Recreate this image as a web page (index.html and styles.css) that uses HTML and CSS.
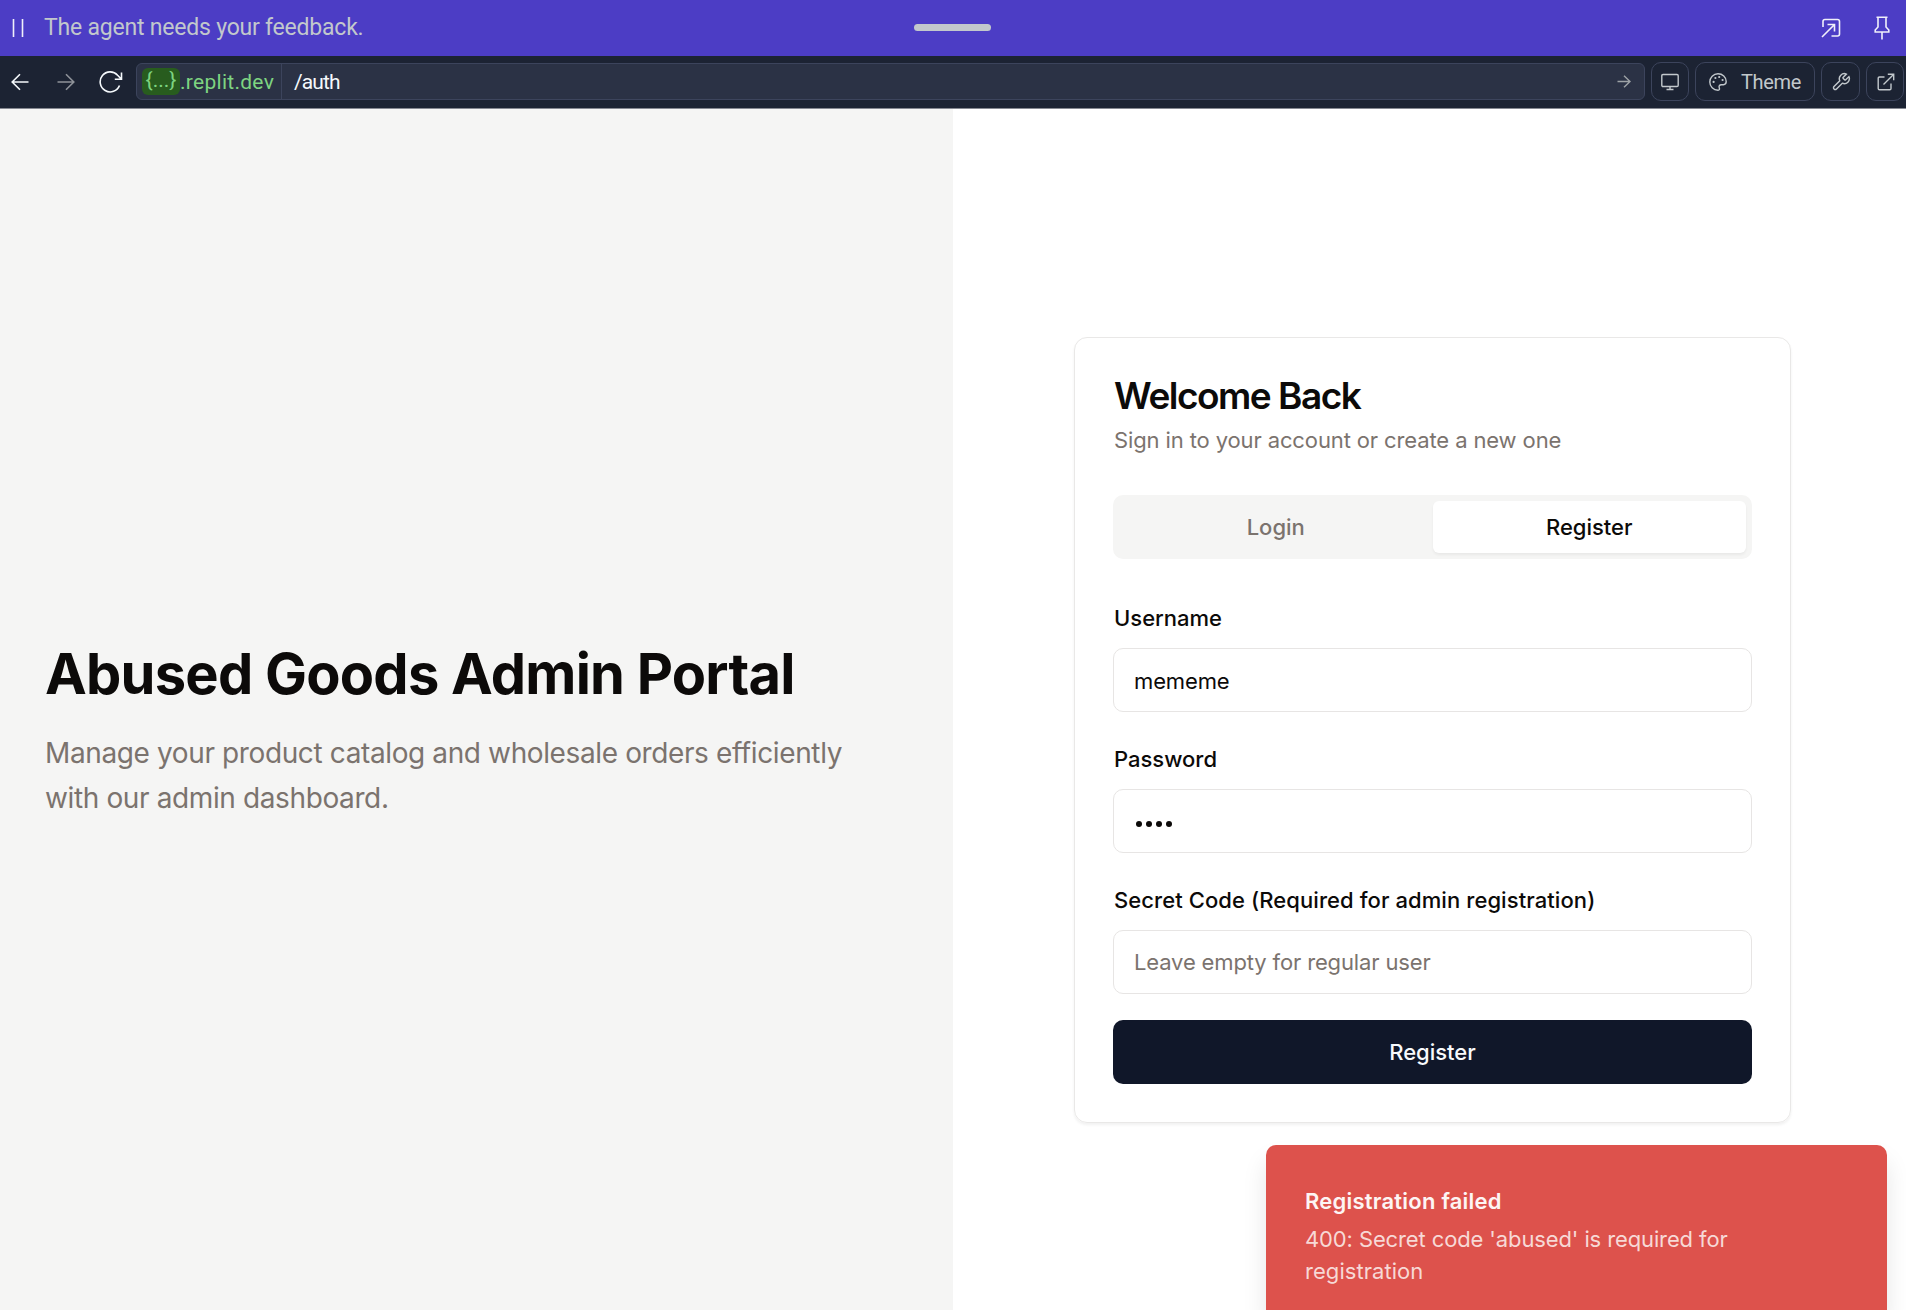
FILE: index.html
```html
<!DOCTYPE html>
<html lang="en">
<head>
<meta charset="utf-8">
<title>Abused Goods Admin Portal</title>
<link rel="stylesheet" href="styles.css">
</head>
<body>
<header class="agent-bar">
  <svg class="icon pause" width="12" height="20" viewBox="0 0 12 20"><path d="M1.500 1v18M10.500 1v18"/></svg>
  <span class="agent-text">The agent needs your feedback.</span>
  <span class="handle"></span>
  <svg class="icon popout" width="20" height="20" viewBox="0 0 20 20"><path d="M2 9V3.500Q2 1.500 4 1.500H16.500Q18.500 1.500 18.500 3.500V16Q18.500 18 16.500 18H10.500M1 19 13.500 6.500M6.500 6.500H13.500V13.500"/></svg>
  <svg class="icon pin" width="16" height="24" viewBox="0 0 16 24"><path d="M2.500 1.200H13.500M4 1.200V11L1.200 14V16H14.800V14L12 11V1.200M8 16V23.500"/></svg>
</header>
<nav class="toolbar">
  <svg class="icon back" width="18" height="18" viewBox="0 0 18 18"><path d="M17.500 9H1.500M9 1.200 1.200 9 9 16.800"/></svg>
  <svg class="icon forward" width="18" height="18" viewBox="0 0 18 18"><path d="M.5 9H16.500M9 1.200 16.800 9 9 16.800"/></svg>
  <svg class="icon reload" width="24" height="22" viewBox="0 0 24 22"><path d="M20.500 14.500A10 10 0 1 1 18.600 4.200L22.500 8.300M22.500 1.500V8.300H15.800"/></svg>
  <div class="url">
    <div class="host"><span class="badge">{...}</span><span class="domain">.replit.dev</span></div>
    <div class="path">/auth</div>
    <svg class="icon go" width="14" height="13" viewBox="0 0 14 13"><path d="M.5 6.500H13M7 .7 13 6.500 7 12.300"/></svg>
  </div>
  <div class="tool"><svg class="icon" width="18" height="18" viewBox="0 0 18 18"><rect x=".8" y="1.500" width="16.400" height="12" rx="1.200"/><path d="M9 13.500V16.500M5.500 16.500H12.500"/></svg></div>
  <div class="tool theme"><svg class="icon" width="18" height="18" viewBox="0 0 18 18"><path d="M9 .8C4.400 .8 .8 4.400 .8 9S4.400 17.200 9 17.200C10.600 17.200 10.700 16 10.300 15 9.600 13.200 10.500 11.700 12.300 11.700H14.500C16.300 11.700 17.200 10.500 17.200 8.600 17.200 4.200 13.500 .8 9 .8Z"/><path class="dots" d="M4.600 8.900h.01M6.400 5h.01M10.200 4h.01M13.600 7h.01"/></svg><span>Theme</span></div>
  <div class="tool wrench"><svg class="icon" width="20" height="20" viewBox="0 0 24 24"><path class="thin" d="M14.700 6.300a1 1 0 0 0 0 1.400l1.600 1.600a1 1 0 0 0 1.400 0l3.770-3.770a6 6 0 0 1-7.940 7.940l-6.910 6.910a2.120 2.120 0 0 1-3-3l6.910-6.910a6 6 0 0 1 7.940-7.940l-3.760 3.760z"/></svg></div>
  <div class="tool external"><svg class="icon" width="18" height="18" viewBox="0 0 18 18"><path d="M7.500 4H2.500Q1.200 4 1.200 5.300V15.500Q1.200 16.800 2.500 16.800H12.700Q14 16.800 14 15.500V10.500M6.500 11.500 16.500 1.500M10.800 1.300H16.700V7.200"/></svg></div>
</nav>
<main class="page">
  <section class="hero">
    <h1>Abused Goods Admin Portal</h1>
    <p>Manage your product catalog and wholesale orders efficiently<br>with our admin dashboard.</p>
  </section>
  <section class="auth">
    <div class="card">
      <h2>Welcome Back</h2>
      <p class="sub">Sign in to your account or create a new one</p>
      <div class="tabs"><div class="tab">Login</div><div class="tab active">Register</div></div>
      <label>Username</label>
      <div class="field">mememe</div>
      <label>Password</label>
      <div class="field password"><i></i><i></i><i></i><i></i></div>
      <label class="secret">Secret Code (Required for admin registration)</label>
      <div class="field placeholder">Leave empty for regular user</div>
      <div class="submit">Register</div>
    </div>
  </section>
</main>
<aside class="toast">
  <strong>Registration failed</strong>
  <p>400: Secret code 'abused' is required for<br><span class="last">registration</span></p>
</aside>
</body>
</html>
```
FILE: styles.css
```css
* { box-sizing: border-box; }
body {
  margin: 0;
  width: 1906px;
  height: 1310px;
  overflow: hidden;
  font-family: Inter, sans-serif;
  color: #0c0a09;
  background: #fff;
}
h1, h2, p { margin: 0; }
.icon { display: block; flex: none; fill: none; stroke: currentColor; stroke-width: 1.6; }

.agent-bar {
  position: relative;
  display: flex;
  align-items: center;
  height: 56px;
  padding: 0 16px 0 12px;
  background: #4c3dc5;
  color: #f0f0fa;
  font-family: Roboto, sans-serif;
}
.agent-text { flex: 1; margin-left: 20px; padding-bottom: 1px; font-size: 23px; letter-spacing: -.21px; color: #c2c8cc; }
.handle {
  position: absolute;
  left: 914px;
  top: 24px;
  width: 77px;
  height: 7px;
  border-radius: 4px;
  background: #c2c8cc;
}
.popout { margin-right: 33px; }

.toolbar {
  display: flex;
  align-items: center;
  height: 53px;
  padding: 0 2px 1px 11px;
  background: #1c2333;
  border-bottom: 1px solid #858891;
  color: #f5f9fc;
  font-family: Roboto, sans-serif;
}
.forward { margin-left: 28px; color: #8e9299; }
.reload { margin: 0 13px 0 24px; }
.url {
  flex: 1;
  display: flex;
  align-items: center;
  height: 37px;
  margin-right: 6px;
  border: 1px solid #3c445c;
  border-radius: 6px;
  background: #2b3245;
  font-size: 21px;
}
.host {
  display: flex;
  align-items: center;
  width: 145px;
  height: 35px;
  padding-left: 5px;
  border-right: 1px solid #3c445c;
  color: #7ed481;
}
.badge {
  width: 38px;
  height: 27px;
  border-radius: 6px;
  background: #285c1e;
  text-align: center;
  line-height: 25px;
}
.domain { padding-top: 1px; letter-spacing: .28px; }
.path { flex: 1; padding: 1px 0 0 12px; letter-spacing: -.9px; }
.go { margin-right: 13px; color: #9da2a6; stroke-width: 1.4; }
.tool {
  display: flex;
  align-items: center;
  justify-content: center;
  width: 38px;
  height: 39px;
  margin-right: 6px;
  border: 1px solid #3c445c;
  border-radius: 10px;
  color: #c2c8cc;
  font-size: 20px;
}
.tool:last-child { margin-right: 0; }
.tool .icon { stroke-width: 1.4; }
.tool .thin { stroke-width: 1.7; }
.dots { stroke-width: 2.2; stroke-linecap: round; }
.theme { width: 120px; gap: 14px; letter-spacing: -.3px; }
.wrench { width: 39px; }
.external { padding-left: 1px; }

.page { display: flex; height: 1201px; }
.hero {
  width: 953px;
  padding: 531px 45px 0;
  background: #f5f5f4;
}
h1 { font-size: 56px; font-weight: 700; line-height: 68px; letter-spacing: -.76px; }
.hero p { margin-top: 23px; font-size: 28px; line-height: 45px; letter-spacing: -.38px; color: #7b736e; }
.auth { flex: 1; padding: 228px 0 0 121px; }
.card {
  width: 717px;
  height: 786px;
  padding: 39px 38px;
  border: 1px solid #e9e8e7;
  border-radius: 13px;
  box-shadow: 0 2px 3px rgba(0, 0, 0, .06);
}
h2 { font-size: 37px; font-weight: 600; line-height: 38px; letter-spacing: -1.5px; padding-left: 1px; }
.sub { margin: 9px 0 39px; padding-left: 1px; font-size: 22px; line-height: 32px; letter-spacing: -.12px; color: #7b736e; }
.tabs {
  display: flex;
  height: 64px;
  margin: 0 0 38px;
  padding: 6px;
  border-radius: 10px;
  background: #f5f5f4;
}
.tab {
  flex: 1;
  display: flex;
  align-items: center;
  justify-content: center;
  border-radius: 6px;
  font-size: 22px;
  font-weight: 500;
  color: #7b736e;
}
.active { background: #fff; color: #0c0a09; box-shadow: 0 2px 3px rgba(0, 0, 0, .05); }
label { display: block; height: 51px; padding: 8px 0 0 1px; font-size: 22px; font-weight: 500; line-height: 26px; }
.secret { letter-spacing: .08px; }
.field {
  display: flex;
  align-items: center;
  height: 64px;
  padding: 1px 20px 0;
  margin-bottom: 26px;
  border: 1px solid #e7e5e4;
  border-radius: 10px;
  font-size: 22px;
  letter-spacing: -.14px;
}
.placeholder { padding-top: 0; color: #7b736e; }
.password { gap: 4px; padding: 6px 22px 0; }
.password i { width: 6px; height: 6px; border-radius: 50%; background: #0c0a09; }
.submit {
  display: flex;
  align-items: center;
  justify-content: center;
  height: 64px;
  border-radius: 10px;
  background: #101729;
  color: #f8fafc;
  font-size: 22px;
  font-weight: 500;
}
.toast {
  position: absolute;
  left: 1266px;
  top: 1145px;
  width: 621px;
  height: 165px;
  padding: 40px 39px;
  border-radius: 10px 10px 0 0;
  background: #dd524c;
  color: #fdf5f4;
  box-shadow: 0 16px 24px rgba(0, 0, 0, .1);
  font-size: 22px;
  line-height: 32px;
}
.toast strong { font-weight: 600; letter-spacing: .22px; }
.toast p { margin-top: 6px; letter-spacing: -.12px; color: #f7d9d6; }
.last { letter-spacing: .05px; }
```
